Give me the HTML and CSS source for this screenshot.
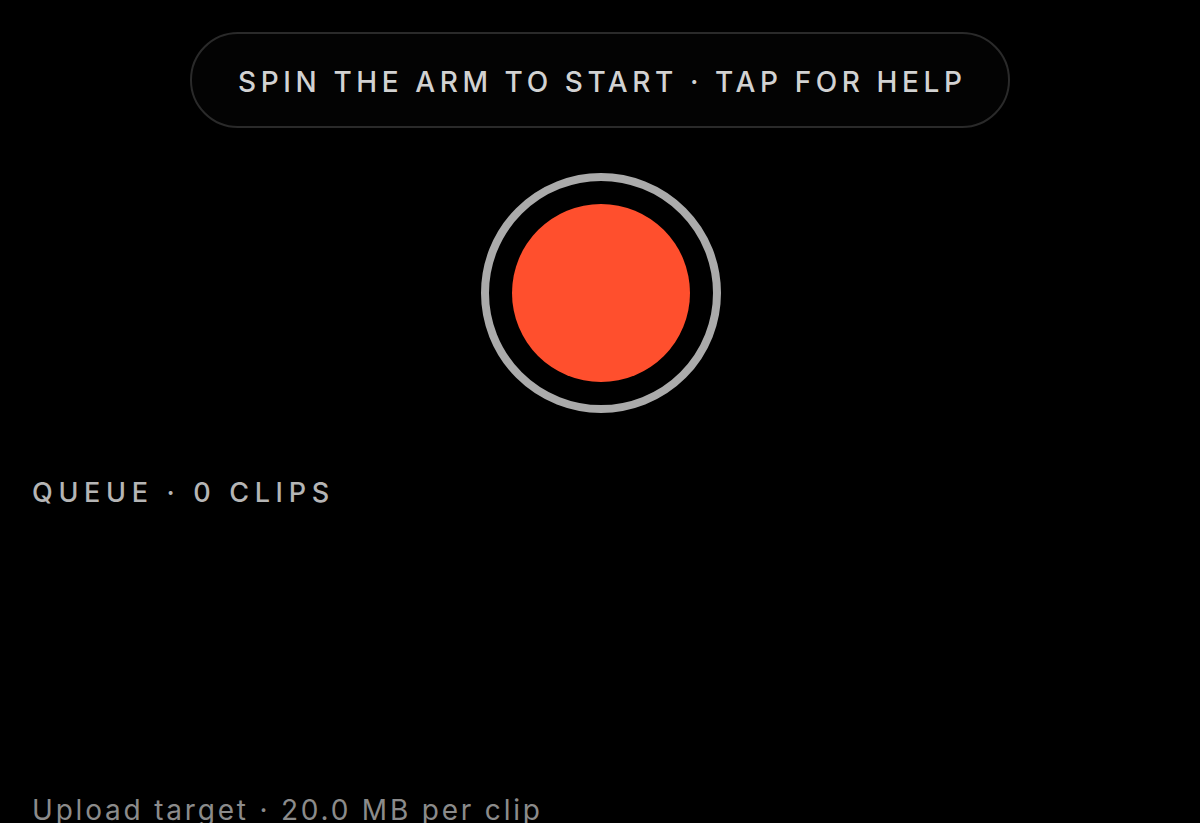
FILE: index.html
```html
<!DOCTYPE html>
<html lang="en">
<head>
<meta charset="utf-8">
<title>Recorder</title>
<link rel="stylesheet" href="styles.css">
</head>
<body>
<main class="screen">
  <button class="hint">SPIN THE ARM TO START · TAP FOR HELP</button>
  <div class="record-wrap">
    <button class="record" aria-label="Record"><span class="record-dot"></span></button>
  </div>
  <section class="queue">
    <h2 class="queue-title">QUEUE · 0 CLIPS</h2>
    <div class="queue-list"></div>
  </section>
  <p class="target">Upload target · 20.0 MB per clip</p>
</main>
</body>
</html>
```

FILE: styles.css
```css
html, body {
  margin: 0;
  padding: 0;
  background: #000;
  height: 100%;
  overflow: hidden;
}
body {
  font-family: Inter, "Noto Sans", "Liberation Sans", sans-serif;
  color: #cfcfcf;
}
.screen {
  display: flex;
  flex-direction: column;
  padding: 32px 32px 0;
  box-sizing: border-box;
}
.hint {
  align-self: center;
  width: 820px;
  height: 96px;
  border-radius: 48px;
  border: 2px solid #2a2a2a;
  background: #030303;
  color: #d2d2d2;
  font-family: inherit;
  font-size: 28px;
  font-weight: 500;
  letter-spacing: 0.164em;
  padding: 4px 0 0 0.164em;
  box-sizing: border-box;
}
.record-wrap {
  display: flex;
  justify-content: center;
  margin-top: 45px;
  padding-left: 1px;
}
.record {
  width: 240px;
  height: 240px;
  border-radius: 50%;
  border: 8px solid #ababab;
  background: #000;
  padding: 0;
  display: flex;
  align-items: center;
  justify-content: center;
  box-sizing: border-box;
}
.record-dot {
  width: 178px;
  height: 178px;
  border-radius: 50%;
  background: #ff4f2d;
}
.queue {
  margin-top: 64px;
}
.queue-title {
  margin: 0;
  font-size: 27px;
  line-height: 32px;
  font-weight: 500;
  letter-spacing: 0.21em;
  color: #b5b5b5;
}
.queue-list {
  height: 284px;
}
.target {
  margin: 0;
  font-size: 28px;
  line-height: 34px;
  font-weight: 400;
  letter-spacing: 0.1em;
  color: #8b8b8b;
}
```
